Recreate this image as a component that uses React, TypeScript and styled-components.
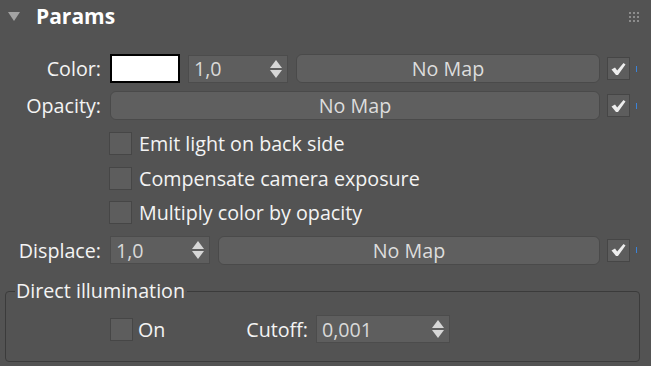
import React from "react";
import styled, { createGlobalStyle } from "styled-components";

const Global = createGlobalStyle`
  html, body { margin: 0; padding: 0; background: #535353; }
  body { width: 651px; height: 366px; overflow: hidden; font-family: "Open Sans", "Noto Sans", sans-serif; }
`;

const Panel = styled.div`
  width: 651px;
  height: 366px;
  background: #535353;
  color: #f4f4f4;
  font-size: 19.7px;
  box-sizing: border-box;
  display: flex;
  flex-direction: column;
`;

const Header = styled.div`
  display: flex;
  align-items: center;
  height: 32px;
  padding: 0 12px 0 8px;
`;

const Arrow = styled.div`
  width: 0;
  height: 0;
  border-left: 6px solid transparent;
  border-right: 6px solid transparent;
  border-top: 9px solid #a3a3a3;
  margin-right: 16px;
`;

const Title = styled.div`
  font-weight: 700;
  font-size: 21px;
  color: #ffffff;
`;

const Grip = styled.div`
  margin-left: auto;
  display: grid;
  grid-template-columns: repeat(3, 2px);
  grid-auto-rows: 2px;
  gap: 2px;
  margin-top: 2px;
  span { background: #8c8c8c; }
`;

const Body = styled.div`
  display: flex;
  flex-direction: column;
  padding-top: 22px;
`;

const Row = styled.div<{ $mt?: number; $h?: number }>`
  display: flex;
  align-items: center;
  height: ${(p) => p.$h ?? 29}px;
  margin-top: ${(p) => p.$mt ?? 0}px;
`;

const Label = styled.div`
  width: 101px;
  text-align: right;
  margin-right: 9px;
  flex: none;
  white-space: nowrap;
`;

const Swatch = styled.div`
  width: 70px;
  height: 29px;
  box-sizing: border-box;
  border: 2px solid #000;
  background: #fff;
  margin-right: 8px;
  flex: none;
`;

const Spinner = styled.div<{ $w: number }>`
  width: ${(p) => p.$w}px;
  height: 28px;
  background: #5e5e5e;
  box-sizing: border-box;
  border: 1px solid #4c4c4c;
  display: flex;
  align-items: center;
  padding-left: 5px;
  padding-right: 5px;
  color: #d9d9d9;
  flex: none;
`;

const SpinValue = styled.span`
  flex: 1;
`;

const SpinArrows = styled.div`
  display: flex;
  flex-direction: column;
  gap: 2px;
`;

const Tri = styled.div<{ $down?: boolean }>`
  width: 0;
  height: 0;
  border-left: 6.5px solid transparent;
  border-right: 6.5px solid transparent;
  ${(p) =>
    p.$down
      ? "border-top: 8px solid #d6d6d6;"
      : "border-bottom: 8px solid #d6d6d6;"}
`;

const Gap = styled.div`
  flex: none;
  width: 8px;
`;

const MapButton = styled.div<{ $ml?: number }>`
  flex: none;
  width: ${(p) => 600 - (p.$ml ?? 0)}px;
  height: 29px;
  box-sizing: border-box;
  background: #5f5f5f;
  border: 1px solid #4a4a4a;
  border-radius: 6px;
  display: flex;
  align-items: center;
  justify-content: center;
  color: #dddddd;
`;

const Check = styled.div`
  width: 23px;
  height: 23px;
  box-sizing: border-box;
  background: #5d5d5d;
  border: 1px solid #464646;
  display: flex;
  align-items: center;
  justify-content: center;
  flex: none;
`;

const RightCheck = styled(Check)`
  margin-left: 7px;
`;

const Mark = styled.div`
  width: 1px;
  height: 6px;
  background: #3a82d8;
  margin-left: 6px;
`;

const OptList = styled.div`
  display: flex;
  flex-direction: column;
  gap: 11.5px;
  margin-top: 12px;
  padding-left: 109px;
`;

const Opt = styled.label`
  display: flex;
  align-items: center;
  gap: 7px;
  height: 23px;
`;

const Group = styled.fieldset`
  margin: 18px 0 0 5px;
  width: 635px;
  height: 80px;
  box-sizing: border-box;
  border: 1px solid #3b3b3b;
  border-radius: 4px;
  padding: 0;
  display: flex;
  align-items: flex-start;
`;

const Legend = styled.legend`
  padding: 0 2px 0 1px;
  margin-left: 9px;
  line-height: 18px;
  color: #f4f4f4;
`;

const GroupRow = styled.div`
  display: flex;
  align-items: center;
  margin-top: 15px;
  padding-left: 104px;
  height: 28px;
`;

const OnLabel = styled.span`
  margin-left: 5px;
  width: 60px;
`;

const CutoffLabel = styled.span`
  width: 110px;
  text-align: right;
  margin-right: 8px;
`;

const CheckMark = () => (
  <svg width="15" height="14" viewBox="0 0 15 14">
    <path d="M0.5 7.5 L4 5.5 L6.2 8.5 L12.5 1 L14.5 2.5 L7 13 L5 13 Z" fill="#ededed" />
  </svg>
);

const Spin = ({ w, v }: { w: number; v: string }) => (
  <Spinner $w={w}>
    <SpinValue>{v}</SpinValue>
    <SpinArrows>
      <Tri />
      <Tri $down />
    </SpinArrows>
  </Spinner>
);

export default function App() {
  return (
    <Panel>
      <Global />
      <Header>
        <Arrow />
        <Title>Params</Title>
        <Grip>
          {Array.from({ length: 9 }).map((_, i) => (
            <span key={i} />
          ))}
        </Grip>
      </Header>
      <Body>
        <Row>
          <Label>Color:</Label>
          <Swatch />
          <Spin w={100} v="1,0" />
          <Gap />
          <MapButton $ml={296}>No Map</MapButton>
          <RightCheck>
            <CheckMark />
          </RightCheck>
          <Mark />
        </Row>
        <Row $mt={8}>
          <Label>Opacity:</Label>
          <MapButton $ml={110}>No Map</MapButton>
          <RightCheck>
            <CheckMark />
          </RightCheck>
          <Mark />
        </Row>
        <OptList>
          <Opt>
            <Check />
            Emit light on back side
          </Opt>
          <Opt>
            <Check />
            Compensate camera exposure
          </Opt>
          <Opt>
            <Check />
            Multiply color by opacity
          </Opt>
        </OptList>
        <Row $mt={12} $h={28}>
          <Label>Displace:</Label>
          <Spin w={100} v="1,0" />
          <Gap />
          <MapButton $ml={218}>No Map</MapButton>
          <RightCheck>
            <CheckMark />
          </RightCheck>
          <Mark />
        </Row>
        <Group>
          <Legend>Direct illumination</Legend>
          <GroupRow>
            <Check />
            <OnLabel>On</OnLabel>
            <CutoffLabel>Cutoff:</CutoffLabel>
            <Spin w={134} v="0,001" />
          </GroupRow>
        </Group>
      </Body>
    </Panel>
  );
}
